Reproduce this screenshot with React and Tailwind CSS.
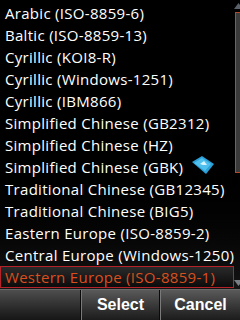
import React from "react";

const items = [
  "Arabic (ISO-8859-6)",
  "Baltic (ISO-8859-13)",
  "Cyrillic (KOI8-R)",
  "Cyrillic (Windows-1251)",
  "Cyrillic (IBM866)",
  "Simplified Chinese (GB2312)",
  "Simplified Chinese (HZ)",
  "Simplified Chinese (GBK)",
  "Traditional Chinese (GB12345)",
  "Traditional Chinese (BIG5)",
  "Eastern Europe (ISO-8859-2)",
  "Central Europe (Windows-1250)",
  "Western Europe (ISO-8859-1)",
];

export default function App() {
  return (
    <div className="w-[240px] h-[320px] bg-black flex flex-col overflow-hidden">
      {/* List + scrollbar */}
      <div className="flex-1 flex bg-gradient-to-b from-black via-black to-[#141414]">
        <div
          className="flex-1 flex flex-col pt-[2px] relative"
          style={{ fontFamily: '"Open Sans", "Liberation Sans", sans-serif' }}
        >
          {items.map((t, i) => {
            const sel = i === items.length - 1;
            return (
              <div
                key={t}
                className={
                  sel
                    ? "h-[22px] flex items-center pl-[4px] border border-[#b5232a] bg-gradient-to-b from-[#2a2a2a] to-[#0c0c0c] text-[#d9501e] text-[15px] tracking-[0.3px] whitespace-nowrap"
                    : "h-[22px] flex items-center pl-[5px] text-white text-[15px] tracking-[0.3px] whitespace-nowrap"
                }
              >
                {t}
              </div>
            );
          })}
          {/* watermark logo */}
          <svg
            className="absolute left-[190px] top-[154px]"
            width="26"
            height="22"
            viewBox="0 0 26 22"
          >
            <path d="M2 8 L12 2 L24 10 L16 20 Z" fill="#2a9fd8" />
            <path d="M4 9 L12 4 L21 10 L15 17 Z" fill="#4fc0ee" />
            <path d="M10 10 L14 7 L17 11 L13 11 Z" fill="#d8f2ff" />
          </svg>
        </div>
        <div className="w-[12px] flex flex-col items-center pt-[3px] pb-[3px]">
          <svg width="9" height="6" viewBox="0 0 9 6">
            <path d="M0 6 L4.5 0 L9 6 Z" fill="#5a6068" />
          </svg>
          <div className="mt-[3px] w-[8px] h-[161px] border border-[#b04a2a] bg-[#3a3a3a]" />
          <div className="flex-1" />
          <svg width="9" height="6" viewBox="0 0 9 6">
            <path d="M0 0 L4.5 6 L9 0 Z" fill="#7a7f86" />
          </svg>
        </div>
      </div>

      {/* Softkeys */}
      <div
        className="h-[31px] flex border-t border-[#6a6a6a]"
        style={{ fontFamily: '"Liberation Sans", Arial, sans-serif' }}
      >
        <div className="w-[81px] bg-gradient-to-b from-[#4e4e4e] to-[#161616] border-r border-[#0a0a0a]" />
        <div className="w-[79px] bg-gradient-to-b from-[#5a5a5a] to-[#1c1c1c] border-l border-[#7a7a7a] border-r border-r-[#0a0a0a] flex items-center justify-center text-white text-[16px] font-bold">
          Select
        </div>
        <div className="flex-1 bg-gradient-to-b from-[#5a5a5a] to-[#1c1c1c] border-l border-[#7a7a7a] flex items-center justify-center text-white text-[16px] font-bold">
          Cancel
        </div>
      </div>
    </div>
  );
}
